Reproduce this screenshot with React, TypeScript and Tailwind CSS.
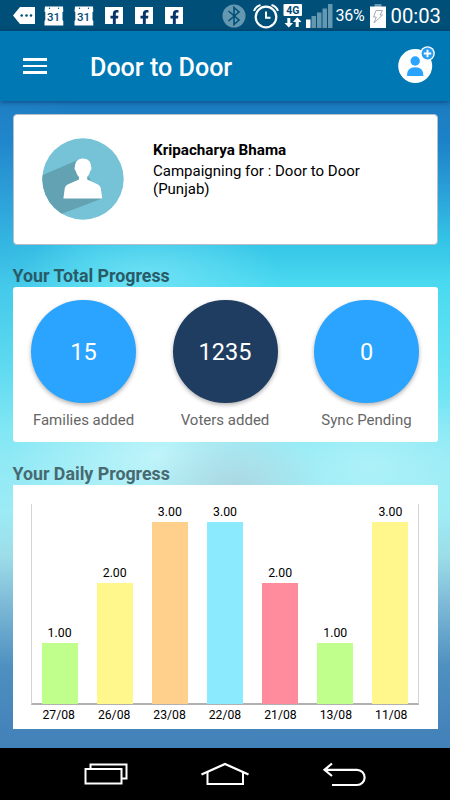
import React from 'react';
import { FaFacebookF } from 'react-icons/fa';

const stats = [
  { value: '15', label: 'Families added', color: 'bg-[#2aa4ff]' },
  { value: '1235', label: 'Voters added', color: 'bg-[#1f3d60]' },
  { value: '0', label: 'Sync Pending', color: 'bg-[#2aa4ff]' },
];

const days = [
  { day: '27/08', count: 1, color: 'bg-[#c0ff8c]' },
  { day: '26/08', count: 2, color: 'bg-[#fff78c]' },
  { day: '23/08', count: 3, color: 'bg-[#ffd08c]' },
  { day: '22/08', count: 3, color: 'bg-[#8ceaff]' },
  { day: '21/08', count: 2, color: 'bg-[#ff8c9d]' },
  { day: '13/08', count: 1, color: 'bg-[#c0ff8c]' },
  { day: '11/08', count: 3, color: 'bg-[#fff78c]' },
];

function CalendarIcon() {
  return (
    <svg width="20" height="20" viewBox="0 0 20 20">
      <path d="M1 0.5H19L19.3 5.5L18.5 6V14L19.3 15V19.5H0.5V15L1.3 14V6L0.5 5.5Z" fill="#fff" />
      <circle cx="5.5" cy="2.2" r="0.7" fill="#004b76" />
      <circle cx="14.5" cy="2.2" r="0.7" fill="#004b76" />
      <text x="9.6" y="14.6" textAnchor="middle" fontSize="11.5" fontWeight="500" fill="#004b76">31</text>
    </svg>
  );
}

function FacebookTile() {
  return (
    <div className="flex h-[17px] w-[18px] items-end justify-end overflow-hidden bg-white pr-px">
      <FaFacebookF className="-mb-px" size={15} color="#08336b" />
    </div>
  );
}

function StatusBar() {
  return (
    <div className="flex h-[31px] items-center justify-between bg-[#004f78] pl-[13px] pr-[7.5px] text-white">
      <div className="flex items-center">
        <svg width="22" height="17" viewBox="0 0 22 17">
          <path d="M0 8.5L7 0H22V17H7Z" fill="#fff" />
          <circle cx="8.7" cy="8.5" r="1.3" fill="#004f78" />
          <circle cx="13.5" cy="8.5" r="1.3" fill="#004f78" />
          <circle cx="18" cy="8.5" r="1.3" fill="#004f78" />
        </svg>
        <div className="ml-[9px] flex gap-[10px]"><CalendarIcon /><CalendarIcon /></div>
        <div className="ml-[11px] flex gap-[12px]"><FacebookTile /><FacebookTile /><FacebookTile /></div>
      </div>
      <div className="flex items-center">
        <svg className="mr-[3px]" width="24" height="24" viewBox="0 0 24 24">
          <circle cx="12" cy="12" r="11.5" fill="#6497b0" />
          <path d="M6.5 7L17 16L12 20.5V3.5L17 8L6.5 17" fill="none" stroke="#004f78" strokeWidth="1.6" />
        </svg>
        <svg className="ml-[4px]" width="27" height="26" viewBox="0 0 27 26" fill="none" stroke="#fff">
          <circle cx="13" cy="14" r="10.3" strokeWidth="2.2" />
          <path d="M13 8.5V14.8H17.5" strokeWidth="2" />
          <path d="M1 8Q2.5 3.5 7.5 2M25 8Q23.5 3.5 18.5 2" strokeWidth="2" />
        </svg>
        <svg className="ml-[3px]" width="20" height="24" viewBox="0 0 20 24">
          <rect x="0.5" y="0" width="18.5" height="12" rx="1" fill="#fff" />
          <text x="9.8" y="9.8" textAnchor="middle" fontSize="10.5" fontWeight="700" fill="#004b76">4G</text>
          <path d="M4.3 14H7.3V19H10L5.8 23.5L1.5 19H4.3ZM12.7 23V18H10L14.2 13.2L18.5 18H15.7V23Z" fill="#fff" />
        </svg>
        <svg className="ml-[3px]" width="27" height="24" viewBox="0 0 27 24">
          <rect x="0" y="15.5" width="4.5" height="8.5" fill="#fff" />
          <path d="M5.5 12H10V24H5.5ZM11 8.5H15.5V24H11ZM16.5 4.5H21V24H16.5ZM22 0H26.5V24H22Z" fill="#6497b0" />
        </svg>
        <span className="ml-[3px] w-[31px] whitespace-nowrap pt-px text-[16px] leading-none tracking-[-0.3px]">36%</span>
        <svg className="ml-[3px]" width="16" height="24" viewBox="0 0 16 24">
          <rect x="4.5" y="0" width="7" height="3" fill="#6497b0" />
          <rect x="0" y="2.5" width="16" height="21.5" fill="#fff" />
          <path d="M6 6.5H12.5L10 11H12.5L4 19L6.3 13H3.5Z" fill="none" stroke="#98a4aa" strokeWidth="0.9" />
        </svg>
        <span className="ml-[5px] w-[52px] whitespace-nowrap pt-px text-[20.3px] leading-none">00:03</span>
      </div>
    </div>
  );
}

function AppBar() {
  return (
    <header className="relative flex h-[70px] items-center bg-[#0078b4] pl-[23px] pr-[14px] shadow-[0_1px_5px_rgba(0,30,80,0.55)]">
      <div className="flex w-6 flex-col gap-[3.5px]">
        <i className="h-[2.7px] bg-white" />
        <i className="h-[2.7px] bg-white" />
        <i className="h-[2.7px] bg-white" />
      </div>
      <h1 className="ml-[43px] pt-[3px] text-[25.1px] font-medium leading-none text-white">Door to Door</h1>
      <svg className="mb-[4px] ml-auto" width="38" height="38" viewBox="0 0 38 38">
        <circle cx="17.2" cy="21" r="17" fill="#fff" />
        <circle cx="17.2" cy="16" r="4.7" fill="#2aa4ff" />
        <path d="M9 31Q8.6 22.3 17.2 22.3T25.4 31Z" fill="#2aa4ff" />
        <circle cx="29.5" cy="8.5" r="7.3" fill="#fff" />
        <circle cx="29.5" cy="8.5" r="5.9" fill="#2a9df0" />
        <path d="M29.5 4.8V12.2M25.8 8.5H33.2" stroke="#fff" strokeWidth="1.9" />
      </svg>
    </header>
  );
}

function Avatar() {
  return (
    <svg width="82" height="82" viewBox="0 0 82 82">
      <defs>
        <clipPath id="disc"><circle cx="41" cy="41" r="40.7" /></clipPath>
      </defs>
      <circle cx="41" cy="41" r="40.7" fill="#76c2d7" />
      <path d="M36 22L-4 39V65L18 76.5L60 60.5Z" fill="#62a2b3" clipPath="url(#disc)" />
      <path d="M41 20.5C45.8 20.5 49 23.6 49 28.5C49.8 29.5 49.5 32 48.3 32.7C47.7 35.7 46 38 45.2 39V41.5L56 46.5Q58.2 47.6 58.8 50L60.2 60.6H21.4L22.8 50Q23.4 47.6 25.6 46.5L37 41.5V39C36 38 34.3 35.7 33.7 32.7C32.5 32 32.2 29.5 33 28.5C33 23.6 36.2 20.5 41 20.5Z" fill="#fff" />
    </svg>
  );
}

function DailyChart() {
  return (
    <div className="h-[244px] bg-white px-[18.5px] pt-[19px]">
      <div className="grid h-[201px] grid-cols-7 border-b-2 border-l border-r border-[#d4d4d4] border-b-[#b3b0b2]">
        {days.map((d) => (
          <div key={d.day} className="flex flex-col items-center justify-end">
            <span className="mb-[3px] text-[12.3px] leading-[13px] text-black">{d.count.toFixed(2)}</span>
            <div className={`-mb-px w-[36px] ${d.color}`} style={{ height: d.count * 60.7 }} />
          </div>
        ))}
      </div>
      <div className="mt-[3px] grid grid-cols-7 text-center text-[12.2px] leading-[14px] text-black">
        {days.map((d) => <span key={d.day}>{d.day}</span>)}
      </div>
    </div>
  );
}

function NavBar() {
  return (
    <nav className="flex h-[52px] items-start bg-black pl-[84px] pt-[13.5px]">
      <svg width="44" height="24" viewBox="0 0 44 24" fill="none" stroke="#fff" strokeWidth="2">
        <path d="M6.5 6V2.5H42.5V16.5H38" />
        <rect x="1.5" y="7" width="36" height="14.5" />
      </svg>
      <svg className="ml-[72px]" width="50" height="24" viewBox="0 0 50 24" fill="none" stroke="#fff" strokeWidth="2">
        <path d="M1.5 12.5L25 2L48.5 12.5" strokeWidth="2.4" />
        <path d="M7.5 10V22H43V10" />
      </svg>
      <svg className="ml-[72px]" width="45" height="25" viewBox="0 0 45 25" fill="none" stroke="#fff" strokeWidth="2.2">
        <path d="M10 1.5L2.5 7.8L10 14M2.5 7.8H35A7.5 7.5 0 0 1 35 23H10" />
      </svg>
    </nav>
  );
}

export default function App() {
  return (
    <div className="flex h-[800px] w-[450px] flex-col overflow-hidden font-['Roboto',sans-serif]">
      <StatusBar />
      <AppBar />
      <main className="h-[647px] bg-[radial-gradient(ellipse_90px_60px_at_235px_385px,rgba(172,212,222,0.85),transparent),radial-gradient(ellipse_150px_80px_at_160px_355px,rgba(205,247,251,0.8),transparent),radial-gradient(ellipse_140px_80px_at_370px_365px,rgba(180,243,249,0.8),transparent),radial-gradient(ellipse_130px_60px_at_150px_175px,rgba(130,230,247,0.65),transparent),radial-gradient(ellipse_100px_200px_at_0px_130px,rgba(50,150,215,0.35),transparent),linear-gradient(#1c7bc0_0px,#1c82c8_40px,#2aa0d8_90px,#34c4e6_140px,#4adaf0_185px,#62e2f3_260px,#90e9f5_360px,#9cebf5_410px,#9cdde9_455px,#80bcd8_500px,#4e90c0_565px,#4280b9_647px)] pl-[12.5px] pr-[12.5px] pt-[12.6px]">
        <section className="flex h-[131.4px] rounded-[4px] border-[1.5px] border-[#b9bdc8] bg-white pl-[28.5px] pt-[23px]">
          <Avatar />
          <div className="ml-[29px] pt-[3px] text-[15px] leading-[18px] text-black">
            <h2 className="mb-[3px] text-[15.2px] font-bold">Kripacharya Bhama</h2>
            <p>Campaigning for : Door to Door<br />(Punjab)</p>
          </div>
        </section>
        <h3 className="mt-[20px] h-[21px] pt-[0.5px] text-[17.8px] font-bold leading-[21px] text-[#285b67]">Your Total Progress</h3>
        <section className="mt-px flex h-[155px] justify-between rounded-[3px] bg-white px-[18.5px] pt-[13px]">
          {stats.map((s) => (
            <div key={s.label} className="flex w-[105px] flex-col items-center">
              <div className={`flex h-[103px] w-[105px] items-center justify-center rounded-full pt-[2px] text-[23.5px] text-white shadow-[0_2px_4px_rgba(0,0,0,0.3)] ${s.color}`}>{s.value}</div>
              <span className="mt-[8px] whitespace-nowrap text-[15px] leading-[18px] text-[#666]">{s.label}</span>
            </div>
          ))}
        </section>
        <h3 className="mb-px mt-[21px] h-[21px] text-[17.8px] font-bold leading-[21px] text-[#476970]">Your Daily Progress</h3>
        <DailyChart />
      </main>
      <NavBar />
    </div>
  );
}
